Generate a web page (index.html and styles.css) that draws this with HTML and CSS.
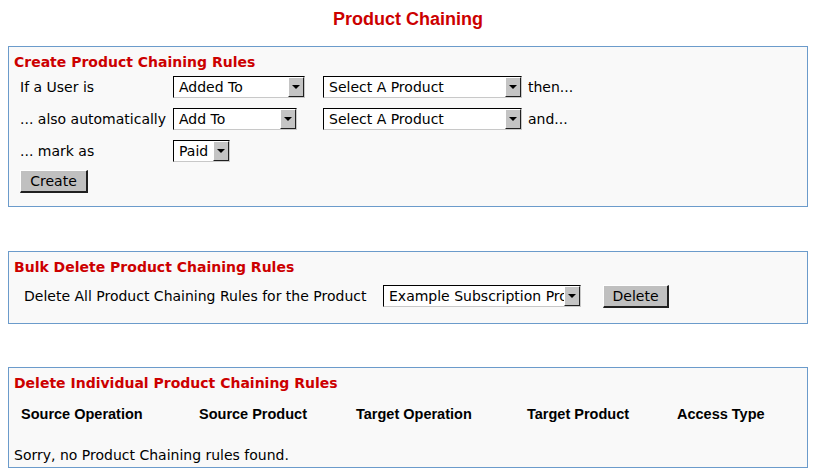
FILE: index.html
```html
<!DOCTYPE html>
<html lang="en">
<head>
    <meta charset="UTF-8">
    <meta name="viewport" content="width=device-width, initial-scale=1.0">
    <title>Product Chaining</title>
    <link rel="stylesheet" href="styles.css">
</head>
<body>
    <h1 class="page-title">Product Chaining</h1>

    <!-- Create rules -->
    <div class="panel panel-create">
        <h2 class="panel-title">Create Product Chaining Rules</h2>
        <div class="rule-form">
            <span class="label">If a User is</span>
            <div class="fake-select w-132"><span class="value">Added To</span><span class="arrow"></span></div>
            <div class="fake-select w-199"><span class="value">Select A Product</span><span class="arrow"></span></div>
            <span class="suffix">then...</span>

            <span class="label">... also automatically</span>
            <div class="fake-select w-124"><span class="value">Add To</span><span class="arrow"></span></div>
            <div class="fake-select w-199"><span class="value">Select A Product</span><span class="arrow"></span></div>
            <span class="suffix">and...</span>

            <span class="label">... mark as</span>
            <div class="fake-select w-57"><span class="value">Paid</span><span class="arrow"></span></div>
            <span></span>
            <span></span>
        </div>
        <button class="btn btn-create">Create</button>
    </div>

    <!-- Bulk delete -->
    <div class="panel panel-bulk">
        <h2 class="panel-title">Bulk Delete Product Chaining Rules</h2>
        <div class="bulk-row">
            <span class="label">Delete All Product Chaining Rules for the Product</span>
            <div class="fake-select w-198"><span class="value">Example Subscription Product</span><span class="arrow"></span></div>
            <button class="btn btn-delete">Delete</button>
        </div>
    </div>

    <!-- Individual delete -->
    <div class="panel panel-list">
        <h2 class="panel-title">Delete Individual Product Chaining Rules</h2>
        <div class="rules-head">
            <span>Source Operation</span>
            <span>Source Product</span>
            <span>Target Operation</span>
            <span>Target Product</span>
            <span>Access Type</span>
        </div>
        <p class="empty">Sorry, no Product Chaining rules found.</p>
    </div>
</body>
</html>
```

FILE: styles.css
```css
* {
    margin: 0;
    padding: 0;
    box-sizing: border-box;
}

body {
    margin: 8px;
    background-color: #ffffff;
    color: #000000;
    font-family: 'DejaVu Sans', Verdana, sans-serif;
    font-size: 14px;
}

.page-title {
    text-align: center;
    font-family: 'Liberation Sans', Arial, sans-serif;
    font-size: 18px;
    font-weight: bold;
    color: #cc0000;
    line-height: 20px;
    margin-top: 1px;
    margin-bottom: 17px;
}

/* Panels */
.panel {
    background-color: #f9f9f9;
    border: 1px solid #6b9bcb;
    padding: 6px 5px 0 5px;
}

.panel + .panel {
    margin-top: 44px;
}

.panel-list {
    margin-top: 43px !important;
}

.panel-title {
    font-size: 14px;
    font-weight: bold;
    color: #cc0000;
    line-height: 18px;
}

/* Create form */
.rule-form {
    display: grid;
    grid-template-columns: 153px 150px 205px 1fr;
    grid-auto-rows: 32px;
    align-items: center;
    margin: 0 0 0 6px;
}

.label,
.suffix {
    white-space: nowrap;
}

.fake-select {
    display: flex;
    height: 22px;
    background-color: #ffffff;
    border-top: 1px solid #000000;
    border-left: 1px solid #000000;
    border-right: 1px solid #c8c8c8;
    border-bottom: 1px solid #c8c8c8;
    overflow: hidden;
}

.fake-select .value {
    flex: 1;
    padding-left: 5px;
    line-height: 20px;
    white-space: nowrap;
    overflow: hidden;
}

.fake-select .arrow {
    position: relative;
    flex: 0 0 16px;
    background-color: #c4c4c4;
    border-top: 1px solid #ffffff;
    border-left: 1px solid #ffffff;
    border-right: 1px solid #202020;
    border-bottom: 1px solid #202020;
}

/* little triangle over the arrow button */
.fake-select .arrow::after {
    content: "";
    position: absolute;
    left: 3px;
    top: 7px;
    border-left: 4px solid transparent;
    border-right: 4px solid transparent;
    border-top: 4px solid #000000;
}

.w-57 { width: 57px; }
.w-124 { width: 124px; }
.w-132 { width: 132px; }
.w-198 { width: 198px; }
.w-199 { width: 199px; }

.btn {
    font-family: 'DejaVu Sans', Verdana, sans-serif;
    font-size: 14px;
    height: 23px;
    background-color: #c0c0c0;
    color: #000000;
    border-top: 1px solid #ffffff;
    border-left: 1px solid #ffffff;
    border-right: 2px solid #202020;
    border-bottom: 2px solid #202020;
}

.btn-create {
    width: 68px;
    margin: 3px 0 13px 6px;
}

/* Bulk delete */
.bulk-row {
    display: flex;
    align-items: center;
    height: 32px;
    margin: 4px 0 11px 10px;
}

.bulk-row .label {
    width: 359px;
}

.btn-delete {
    width: 66px;
    margin-left: 22px;
}

/* Individual list */
.rules-head {
    display: grid;
    grid-template-columns: 178px 157px 171px 150px 1fr;
    margin: 13px 0 0 7px;
    font-family: 'Liberation Sans', Arial, sans-serif;
    font-weight: bold;
    font-size: 14.5px;
    line-height: 18px;
}

.empty {
    margin-top: 24px;
    line-height: 16px;
    padding-bottom: 4px;
}
```
